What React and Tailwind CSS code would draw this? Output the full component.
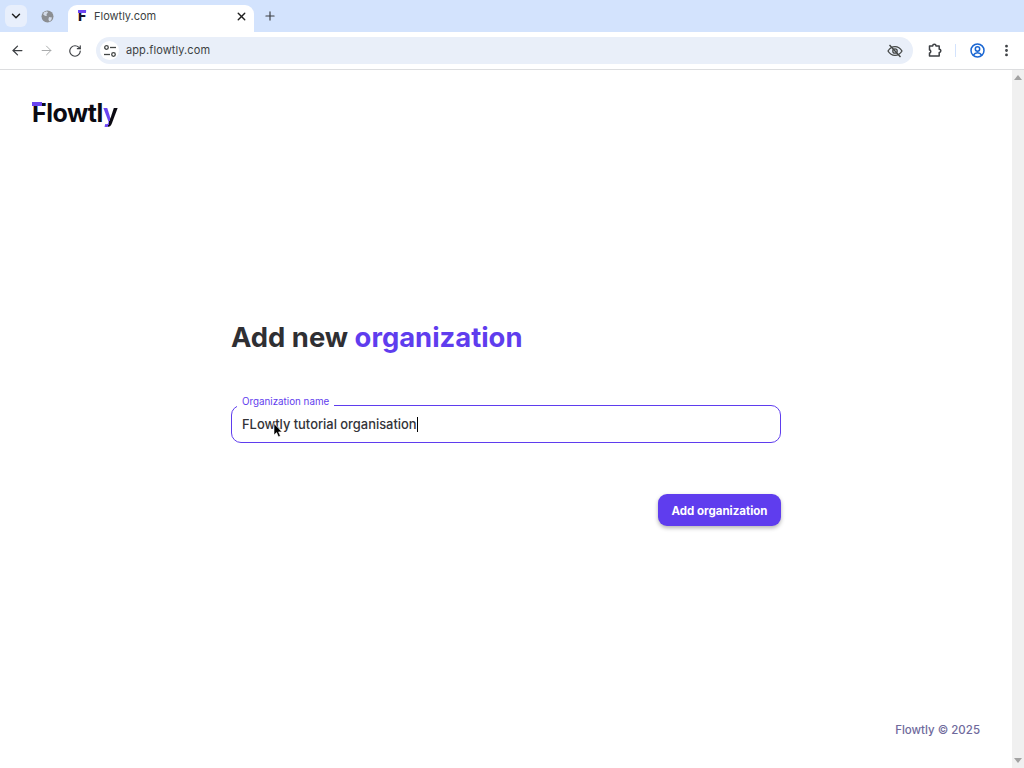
import React from 'react';
import { ArrowLeft, ArrowRight, RotateCw, X, Plus, ChevronDown, EllipsisVertical } from 'lucide-react';

function TuneIcon() {
  return (
    <svg width="14" height="14" viewBox="0 0 14 14" fill="none" stroke="#444746" strokeWidth="1.3">
      <circle cx="3.5" cy="3.5" r="1.8" />
      <path d="M7 3.5h6" />
      <circle cx="10.5" cy="10.5" r="1.8" />
      <path d="M1 10.5h6" />
    </svg>
  );
}

function GlobeIcon() {
  return (
    <svg width="13" height="13" viewBox="0 0 13 13">
      <circle cx="6.5" cy="6.5" r="6" fill="#8b8e92" />
      <path d="M3 2.2l3-1 1 1.4-1.6 1.6.8 1.4-2 .4-2-1.4zM8 7l3 .4-.8 2.8-2 1.4-.8-2.4z" fill="#d3dbe8" />
    </svg>
  );
}

function EyeSlashIcon() {
  return (
    <svg width="16" height="16" viewBox="0 0 16 16" fill="none" stroke="#444746" strokeWidth="1.3">
      <path d="M1 8c1.800-3 4.200-4.400 7-4.400s5.200 1.400 7 4.400c-1.800 3-4.200 4.400-7 4.400S2.800 11 1 8z" />
      <circle cx="8" cy="8" r="2.200" />
      <path d="M2.500 2l11 12" strokeWidth="1.400" />
    </svg>
  );
}

function ExtensionIcon() {
  return (
    <svg width="15" height="15" viewBox="0 0 15 15" fill="none" stroke="#3c3f43" strokeWidth="1.500" strokeLinejoin="round">
      <path d="M1.500 3h3.200c0-2.200 3.300-2.200 3.300 0h3.200v3.200c2.200 0 2.200 3.300 0 3.300v3.500H1.500V10c1.700 0 1.700-3 0-3z" />
    </svg>
  );
}

function AccountIcon() {
  return (
    <svg width="15" height="15" viewBox="0 0 15 15" fill="none" stroke="#1a66d2" strokeWidth="1.500">
      <circle cx="7.500" cy="7.500" r="6.500" />
      <circle cx="7.500" cy="6" r="2.200" />
      <path d="M3.500 12c1-1.600 2.400-2.200 4-2.200s3 .6 4 2.200" />
    </svg>
  );
}

function Favicon() {
  return (
    <div className="relative w-3 h-4 flex justify-center">
      <span className="font-['Inter',sans-serif] font-extrabold text-[14px] leading-4 text-[#14122b]">F</span>
      <span className="absolute top-[2px] left-[2px] w-[8px] h-[3px] bg-[#6a45f0]"></span>
    </div>
  );
}

function BrowserChrome() {
  return (
    <div className="shrink-0 font-['Liberation_Sans',sans-serif]">
      {/* tab strip */}
      <div className="h-8 bg-[#d3e3fd] flex items-end pl-[5px]">
        <div className="w-[22px] h-[22px] mb-[5px] rounded-md bg-[#e8effc] flex items-center justify-center">
          <ChevronDown size={14} strokeWidth={2.5} color="#1f1f1f" />
        </div>
        <div className="w-[41px] h-full flex items-center justify-center">
          <GlobeIcon />
        </div>
        <div className="w-[186px] h-[27px] bg-white rounded-t-[9px] flex items-center pl-[8px] pr-[6px] pb-[5px]">
          <Favicon />
          <span className="ml-[6px] text-[11px] text-[#3c3f43] font-['Inter',sans-serif]">Flowtly.com</span>
          <X size={13} strokeWidth={2.5} color="#1f1f1f" className="ml-auto" />
        </div>
        <div className="w-[32px] h-full flex items-center justify-center">
          <Plus size={14} strokeWidth={2} color="#3c3f43" />
        </div>
      </div>
      {/* toolbar */}
      <div className="h-[37px] bg-white rounded-t-[7px] flex items-center">
        <div className="w-[92px] pl-[10px] flex items-center gap-[14px]">
          <ArrowLeft size={15} strokeWidth={2} color="#3c3f43" />
          <ArrowRight size={15} strokeWidth={1.5} color="#a4a6a8" />
          <RotateCw size={14} strokeWidth={2} color="#3c3f43" />
        </div>
        <div className="w-[817px] ml-[4px] h-[27px] rounded-full bg-[#e9eff9] flex items-center pl-1 pr-[10px]">
          <div className="w-[19px] h-[19px] rounded-full bg-white flex items-center justify-center">
            <TuneIcon />
          </div>
          <span className="ml-[7px] text-[11px] tracking-[0.1px] text-[#3c3f43] font-['Inter',sans-serif]">app.flowtly.com</span>
          <span className="ml-auto"><EyeSlashIcon /></span>
        </div>
        <span className="ml-[15px]"><ExtensionIcon /></span>
        <div className="ml-[12px] w-px h-[13px] bg-[#d3e3fd]"></div>
        <span className="ml-[14px]"><AccountIcon /></span>
        <EllipsisVertical size={15} strokeWidth={2.5} color="#3c3f43" className="ml-[14px]" />
      </div>
      <div className="h-px bg-[#dcdddf]"></div>
    </div>
  );
}

function Logo() {
  return (
    <div className="relative w-fit font-['Inter',sans-serif] font-bold text-[25px] leading-8 tracking-[-0.5px] text-[#0b0a12]">
      Flowtl<span className="bg-[linear-gradient(105deg,#6a45f0_55%,#0b0a12_55%)] bg-clip-text text-transparent">y</span>
      <span className="absolute left-0 top-[5px] w-[10px] h-[4px] bg-[#6a45f0]"></span>
    </div>
  );
}

function Scrollbar() {
  return (
    <div className="w-3 shrink-0 bg-[#f0f0f0] flex flex-col items-center justify-between py-[5px]">
      <div className="w-0 h-0 border-x-4 border-x-transparent border-b-[5px] border-b-[#a3a3a3]"></div>
      <div className="w-0 h-0 border-x-4 border-x-transparent border-t-[5px] border-t-[#a3a3a3]"></div>
    </div>
  );
}

export default function App() {
  return (
    <div className="h-screen w-full flex flex-col overflow-hidden bg-white">
      <BrowserChrome />
      <div className="flex-1 flex min-h-0">
        <div className="flex-1 flex flex-col font-['Inter',sans-serif] pt-[27px] pb-[30px]">
          <div className="pl-8">
            <Logo />
          </div>

          <div className="w-[550px] mx-auto mt-[190px]">
            <h1 className="text-[27.4px] leading-9 font-bold text-[#2f2f33]">
              Add new <span className="text-[#5f3dee]">organization</span>
            </h1>

            <div className="relative mt-[50px] h-[38px] border border-[#5f3dee] rounded-[10px] flex items-center px-[10px] pt-px">
              <span className="absolute -top-[11px] left-[5px] bg-white px-[5px] text-[9.8px] leading-[14px] text-[#5f3dee]">Organization name</span>
              <span className="text-[12.9px] font-medium text-[#333338]">FLowtly tutorial organisation</span>
              <span className="w-px h-[15px] bg-black"></span>
              <svg className="absolute left-[41px] top-[17px]" width="10" height="15" viewBox="0 0 10 15">
                <path d="M1 0.5v11.5l2.600-2.400 1.800 4.200 2-0.900-1.800-4h3.400z" fill="#000" stroke="#fff" strokeWidth="0.6" />
              </svg>
            </div>

            <div className="flex justify-end mt-[51px]">
              <button className="h-8 w-[123px] pt-[3px] rounded-[9px] bg-[#5f3dee] text-white text-[11.5px] font-bold shadow-[0_2px_4px_rgba(0,0,0,0.3)]">
                Add organization
              </button>
            </div>
          </div>

          <div className="mt-auto pr-8 text-right text-[11.5px] font-medium leading-4 text-[#6f6a9c]">
            Flowtly © 2025
          </div>
        </div>
        <Scrollbar />
      </div>
    </div>
  );
}
